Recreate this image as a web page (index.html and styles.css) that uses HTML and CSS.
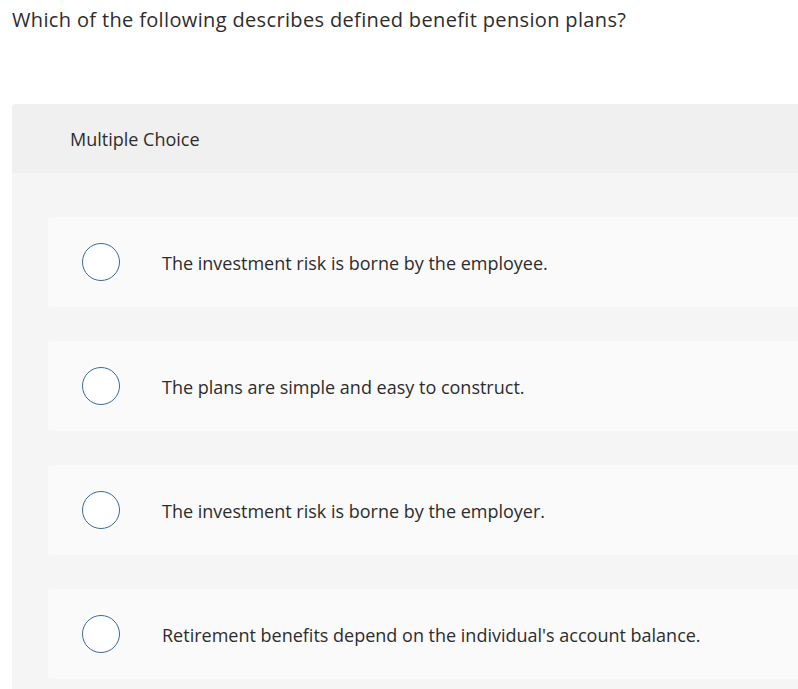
FILE: index.html
```html
<!DOCTYPE html>
<html>
<head>
<meta charset="utf-8">
<link rel="stylesheet" href="styles.css">
</head>
<body>
<p class="question">Which of the following describes defined benefit pension plans?</p>
<div class="panel">
  <div class="panel-head">Multiple Choice</div>
  <div class="panel-body">
    <div class="option"><span class="radio"></span><span class="label">The investment risk is borne by the employee.</span></div>
    <div class="option"><span class="radio"></span><span class="label">The plans are simple and easy to construct.</span></div>
    <div class="option"><span class="radio"></span><span class="label">The investment risk is borne by the employer.</span></div>
    <div class="option"><span class="radio"></span><span class="label">Retirement benefits depend on the individual's account balance.</span></div>
  </div>
</div>
</body>
</html>
```
FILE: styles.css
```css
html, body {
  margin: 0;
  padding: 0;
  overflow: hidden;
  background: #fff;
}
body {
  font-family: "Open Sans", "Lato", sans-serif;
  color: #2d2d2d;
}
.question {
  margin: 0;
  padding: 6px 0 0 12px;
  font-size: 20px;
  letter-spacing: 0.35px;
  line-height: 28px;
  height: 98px;
}
.panel {
  margin-left: 12px;
  border-top-left-radius: 4px;
  overflow: hidden;
}
.panel-head {
  background: #f0f0f0;
  height: 69px;
  display: flex;
  align-items: center;
  padding-left: 58px;
  font-size: 18px;
}
.panel-body {
  background: #f5f5f5;
  padding: 44px 0 20px 36px;
  display: flex;
  flex-direction: column;
  gap: 34px;
}
.option {
  background: #fafafa;
  height: 90px;
  border-radius: 4px 0 0 4px;
  display: flex;
  align-items: center;
}
.radio {
  box-sizing: border-box;
  width: 38px;
  height: 38px;
  border: 1.5px solid #3a6a9a;
  border-radius: 50%;
  background: #fff;
  margin-left: 34px;
  flex: none;
}
.label {
  margin-left: 42px;
  padding-top: 2px;
  font-size: 18px;
}
```
